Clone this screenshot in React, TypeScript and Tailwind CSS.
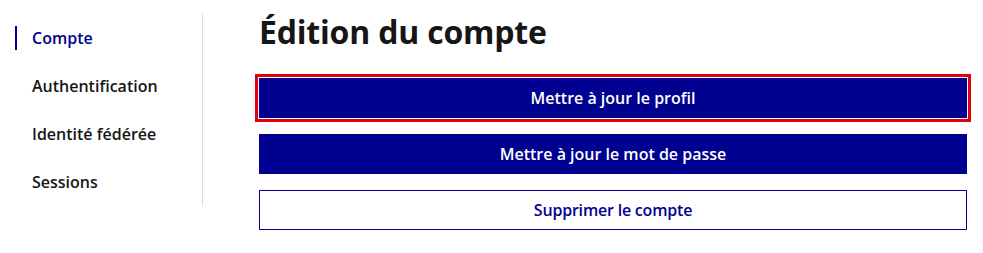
import React from "react";

const menu = [
  { label: "Compte", active: true },
  { label: "Authentification", active: false },
  { label: "Identité fédérée", active: false },
  { label: "Sessions", active: false },
];

export default function App() {
  return (
    <div
      className="flex w-[983px] h-[253px] bg-white text-[#161616]"
      style={{ fontFamily: "'Open Sans', 'Noto Sans', sans-serif" }}
    >
      {/* menu latéral */}
      <nav className="w-[203px] pt-[14px]">
        <ul className="border-r border-[#dddddd] h-[192px]">
          {menu.map((item) => (
            <li key={item.label} className="h-12 flex items-center">
              <span
                className={
                  "w-[2px] h-6 ml-[15px] mr-[15px] " +
                  (item.active ? "bg-[#000091]" : "bg-transparent")
                }
              />
              <a
                href="#"
                className={
                  "text-[16px] font-semibold " +
                  (item.active ? "text-[#000091]" : "text-[#161616]")
                }
              >
                {item.label}
              </a>
            </li>
          ))}
        </ul>
      </nav>

      {/* contenu */}
      <main className="flex-1 pl-[56px] pr-[16px] pt-[12px]">
        <h1 className="text-[32px] leading-[40px] font-bold mb-[26px] tracking-[-0.2px]">
          Édition du compte
        </h1>
        <div className="flex flex-col gap-4">
          <button className="h-10 w-full bg-[#000091] text-white text-[16px] font-semibold outline-[3px] outline-solid outline-[#e1000f] outline-offset-1">
            Mettre à jour le profil
          </button>
          <button className="h-10 w-full bg-[#000091] text-white text-[16px] font-semibold">
            Mettre à jour le mot de passe
          </button>
          <button className="h-10 w-full bg-white border border-[#000091] text-[#000091] text-[16px] font-semibold tracking-[-0.2px]">
            Supprimer le compte
          </button>
        </div>
      </main>
    </div>
  );
}
